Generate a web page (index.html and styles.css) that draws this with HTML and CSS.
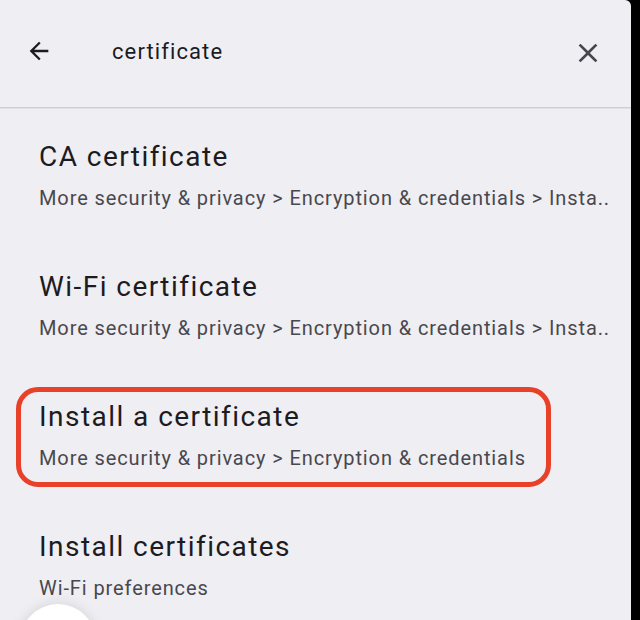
FILE: index.html
```html
<!DOCTYPE html>
<html>
<head>
<meta charset="utf-8">
<link rel="stylesheet" href="styles.css">
</head>
<body>
<div class="screen">
  <header class="search-bar">
    <svg class="icon back" viewBox="0 0 24 24" width="28" height="28"><path d="M20 11H7.83l5.59-5.59L12 4l-8 8 8 8 1.41-1.41L7.83 13H20v-2z" fill="#1c1b1f"/></svg>
    <div class="query">certificate</div>
    <svg class="icon close" viewBox="0 0 24 24" width="32" height="32"><path d="M19 6.41 17.59 5 12 10.59 6.41 5 5 6.41 10.59 12 5 17.59 6.41 19 12 13.41 17.59 19 19 17.59 13.41 12z" fill="#47464c"/></svg>
  </header>
  <div class="divider"></div>
  <ul class="results">
    <li class="row">
      <div class="title">CA certificate</div>
      <div class="sub">More security &amp; privacy &gt; Encryption &amp; credentials &gt; Insta..</div>
    </li>
    <li class="row">
      <div class="title">Wi-Fi certificate</div>
      <div class="sub">More security &amp; privacy &gt; Encryption &amp; credentials &gt; Insta..</div>
    </li>
    <li class="row highlighted">
      <div class="title">Install a certificate</div>
      <div class="sub">More security &amp; privacy &gt; Encryption &amp; credentials</div>
      <div class="mark"></div>
    </li>
    <li class="row">
      <div class="title">Install certificates</div>
      <div class="sub">Wi-Fi preferences</div>
    </li>
  </ul>
  <div class="fab"></div>
</div>
</body>
</html>
```
FILE: styles.css
```css
html, body {
  margin: 0;
  padding: 0;
  background: #000;
  width: 640px;
  height: 620px;
  overflow: hidden;
}
.screen {
  position: relative;
  width: 631px;
  height: 620px;
  background: #efeef3;
  border-top-right-radius: 6px;
  overflow: hidden;
  font-family: Roboto, "Noto Sans", sans-serif;
}
.search-bar {
  height: 107px;
  display: flex;
  align-items: center;
  padding: 0 27px 0 25px;
  box-sizing: border-box;
}
.icon { flex: none; }
.back { margin-top: -5px; }
.query {
  flex: 1;
  margin-left: 59px;
  font-size: 22px;
  letter-spacing: 1.1px;
  color: #1c1b1f;
  padding-bottom: 5px;
}
.close { margin-top: -2px; }
.divider {
  height: 1px;
  background: #cfcdd3;
  box-shadow: 0 1px 0 #e2e0e6;
}
.results {
  list-style: none;
  margin: 0;
  padding: 0;
}
.row {
  position: relative;
  height: 130px;
  box-sizing: border-box;
  padding: 33px 0 0 39px;
}
.title {
  font-size: 28px;
  line-height: 32px;
  letter-spacing: 1.45px;
  color: #1c1b1f;
}
.sub {
  margin-top: 12px;
  font-size: 20px;
  line-height: 26px;
  letter-spacing: 0.9px;
  color: #49484e;
  white-space: nowrap;
}
.mark {
  position: absolute;
  left: 16px;
  top: 19px;
  width: 535px;
  height: 100px;
  box-sizing: border-box;
  border: 5px solid #e9402a;
  border-radius: 22px;
}
.fab {
  position: absolute;
  left: 20px;
  top: 604px;
  width: 76px;
  height: 76px;
  border-radius: 50%;
  background: #ffffff;
  box-shadow: 0 0 14px rgba(0,0,0,0.12);
}
```
